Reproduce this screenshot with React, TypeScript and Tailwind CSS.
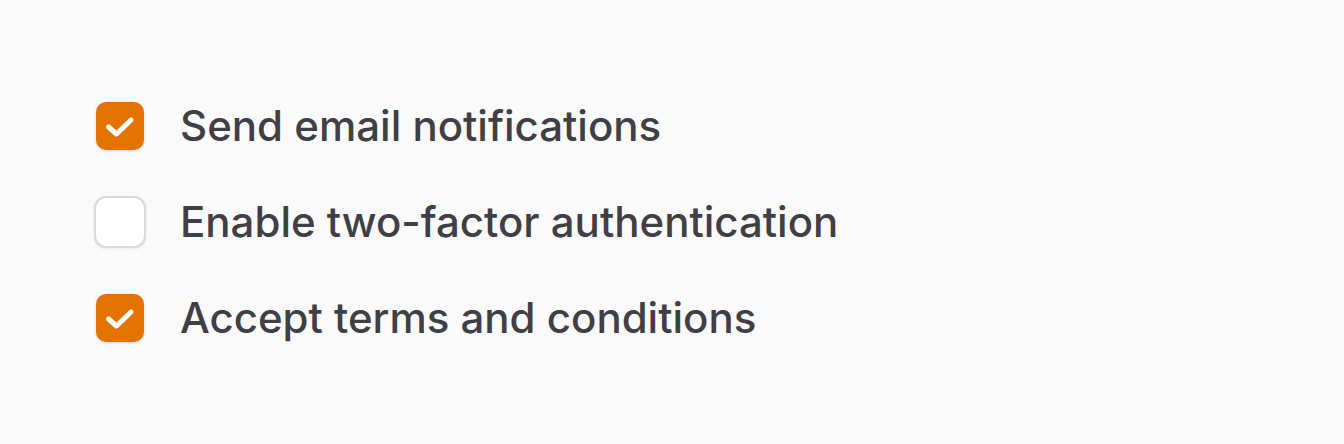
import React, { useState } from "react";

function Check() {
  return (
    <svg viewBox="0 0 48 48" className="h-12 w-12" fill="none">
      <path d="M12.5 25 L20.5 32 L35 18" stroke="#ffffff" strokeWidth="5" strokeLinecap="round" strokeLinejoin="round" />
    </svg>
  );
}

export default function App() {
  const [items, setItems] = useState([
    { label: "Send email notifications", checked: true },
    { label: "Enable two-factor authentication", checked: false },
    { label: "Accept terms and conditions", checked: true },
  ]);
  return (
    <div className="h-[444px] w-[1344px] bg-[#fafafa] pl-[96px] pt-[102px]" style={{ fontFamily: "Inter, 'Noto Sans', sans-serif" }}>
      <div className="flex flex-col gap-12">
        {items.map((it, i) => (
          <label key={i} className="flex h-12 cursor-pointer items-center gap-[36px]">
            <button
              type="button"
              onClick={() => setItems(items.map((x, j) => (j === i ? { ...x, checked: !x.checked } : x)))}
              className={
                it.checked
                  ? "flex h-12 w-12 shrink-0 items-center justify-center rounded-[10px] bg-[#e37200] shadow-[0_1px_3px_rgba(0,0,0,0.12)]"
                  : "-mx-[2px] flex h-[52px] w-[52px] shrink-0 items-center justify-center rounded-[12px] border-2 border-[#d9d9dc] bg-white shadow-[0_1px_3px_rgba(0,0,0,0.06)]"
              }
            >
              {it.checked && <Check />}
            </button>
            <span className="text-[42px] font-medium leading-none text-[#3f3f46]">{it.label}</span>
          </label>
        ))}
      </div>
    </div>
  );
}
